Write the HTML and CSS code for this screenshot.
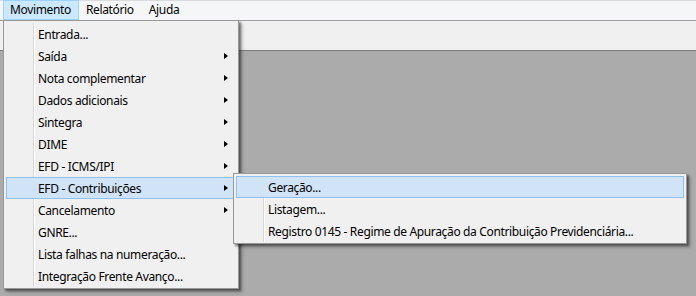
FILE: index.html
```html
<!DOCTYPE html>
<html>
<head>
  <title>Movimento</title>
  <link rel="stylesheet" href="styles.css">
</head>
<body>
  <div class="menubar">
    <span class="top-item active">Movimento</span>
    <span class="top-item">Relatório</span>
    <span class="top-item">Ajuda</span>
  </div>
  <div class="toolbar"></div>
  <div class="workspace"></div>

  <div class="popup main-menu">
    <div class="items">
      <div class="item">Entrada...</div>
      <div class="item sub">Saída</div>
      <div class="item sub">Nota complementar</div>
      <div class="item sub">Dados adicionais</div>
      <div class="item sub">Sintegra</div>
      <div class="item sub">DIME</div>
      <div class="item sub">EFD - ICMS/IPI</div>
      <div class="item sub hover">EFD - Contribuições</div>
      <div class="item sub">Cancelamento</div>
      <div class="item">GNRE...</div>
      <div class="item">Lista falhas na numeração...</div>
      <div class="item">Integração Frente Avanço...</div>
    </div>
  </div>

  <div class="popup sub-menu">
    <div class="items">
      <div class="item hover">Geração...</div>
      <div class="item">Listagem...</div>
      <div class="item">Registro 0145 - Regime de Apuração da Contribuição Previdenciária...</div>
    </div>
  </div>
</body>
</html>
```

FILE: styles.css
```css
html, body {
  margin: 0;
  height: 100%;
}
body {
  font-family: "Noto Sans", "Open Sans", sans-serif;
  font-size: 12px;
  letter-spacing: -0.35px;
  color: #000;
  background: #ababab;
  display: flex;
  flex-direction: column;
  overflow: hidden;
}
.menubar {
  height: 19px;
  background: #f5f6f7;
  border-top: 1px solid #dadbdc;
  display: flex;
  padding-left: 3px;
}
.top-item {
  padding: 0 7px 0 6px;
  line-height: 18px;
  border: 1px solid transparent;
  margin-top: -1px;
  height: 18px;
}
.top-item.active {
  background: #cce8ff;
  border-color: #99d1ff;
}
.toolbar {
  height: 29px;
  background: #f0f0f0;
  border-top: 1px solid #a0a0a0;
  border-bottom: 1px solid #7c7c7c;
}
.workspace {
  flex: 1;
  background: #ababab;
}
.popup {
  position: absolute;
  background: #f0f0f0;
  border: 1px solid #979797;
  box-shadow: 2px 2px 2px rgba(0,0,0,0.45), 4px 4px 3px rgba(0,0,0,0.15);
}
.main-menu {
  left: 3px;
  top: 20px;
  width: 234px;
  padding: 2px 0 1px;
}
.sub-menu {
  left: 233px;
  top: 173px;
  width: 452px;
  padding: 2px 0 1px;
}
.items {
  margin: 0 2px;
  background: linear-gradient(to right, transparent 27px, #d7d7d7 27px, #d7d7d7 28px, #fff 28px, #fff 29px, transparent 29px);
}
.item {
  position: relative;
  height: 19px;
  padding-top: 1px;
  line-height: 19px;
  padding-left: 31px;
  border: 1px solid transparent;
  white-space: nowrap;
}
.item.hover {
  background: #d1e3f6;
  border-color: #8fc1ef;
}
.item.sub::after {
  content: "";
  position: absolute;
  right: 7px;
  top: 7px;
  border-left: 4px solid #000;
  border-top: 3.5px solid transparent;
  border-bottom: 3.5px solid transparent;
}
```
